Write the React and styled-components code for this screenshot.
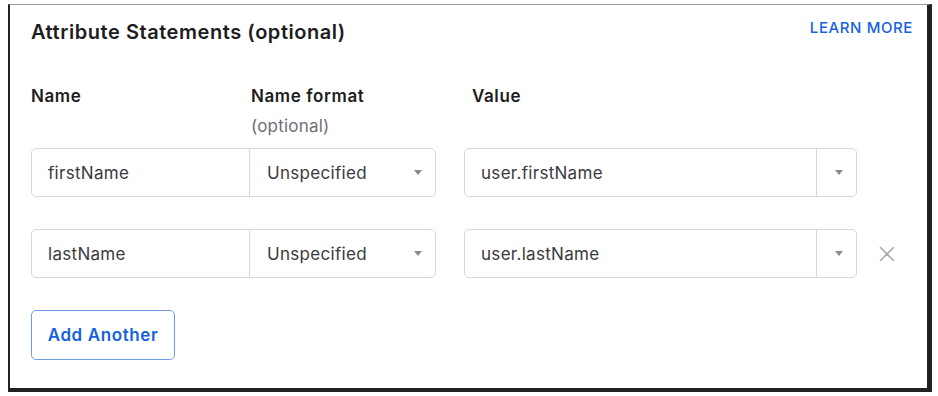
import React from 'react';
import styled, { createGlobalStyle } from 'styled-components';

const GlobalStyle = createGlobalStyle`
	html, body {
		margin: 0;
		padding: 0;
		background: #ffffff;
	}
	body {
		font-family: Inter, 'Noto Sans', 'Liberation Sans', sans-serif;
	}
`;

const Frame = styled.section`
	box-sizing: border-box;
	width: 924px;
	height: 388px;
	margin: 4px 0 0 8px;
	border-top: 1px solid #9a9a9c;
	border-left: 2px solid #222326;
	border-right: 5px solid #1f2125;
	border-bottom: 4px solid #1f2125;
	padding: 13px 14px 0 21px;
	background: #fff;
`;

const Header = styled.header`
	display: flex;
	justify-content: space-between;
	align-items: flex-start;
`;

const Title = styled.h2`
	margin: 0;
	font-size: 20px;
	line-height: 28px;
	font-weight: 600;
	letter-spacing: 0.55px;
	color: #1d1d21;
`;

const LearnMore = styled.a`
	margin-top: 0;
	font-size: 15px;
	line-height: 20px;
	font-weight: 500;
	letter-spacing: 0.6px;
	color: #1662dd;
	text-decoration: none;
	text-transform: uppercase;
`;

const Labels = styled.div`
	display: grid;
	grid-template-columns: 220px 213px 1fr;
	margin-top: 39px;
`;

const Label = styled.div`
	padding-left: ${p => p.$indent || 0}px;
	font-size: 17px;
	line-height: 22px;
	font-weight: 600;
	letter-spacing: 0.6px;
	color: #1d1d21;
`;

const Hint = styled.div`
	margin-top: 8px;
	font-size: 17px;
	line-height: 22px;
	font-weight: 400;
	letter-spacing: 0.2px;
	color: #6e6e78;
`;

const Rows = styled.div`
	display: flex;
	flex-direction: column;
	gap: 32px;
	margin-top: 11px;
`;

const Row = styled.div`
	display: flex;
	align-items: center;
`;

const Group = styled.div`
	display: flex;
	box-sizing: border-box;
	height: 49px;
	width: ${p => p.$width}px;
	margin-right: ${p => p.$gap || 0}px;
	border: 1px solid #d7d7dc;
	border-radius: 5px;
	background: #fff;
`;

const Cell = styled.div`
	display: flex;
	align-items: center;
	box-sizing: border-box;
	flex: ${p => (p.$width ? `0 0 ${p.$width}px` : '1')};
	padding: 0 ${p => p.$padRight ?? 16}px 0 ${p => p.$padLeft ?? 16}px;
	border-left: ${p => (p.$divider ? '1px solid #d7d7dc' : 'none')};
	font-size: 17px;
	letter-spacing: 0.3px;
	color: #3a3a40;
	justify-content: ${p => (p.$center ? 'center' : 'flex-start')};
`;

const CellText = styled.span`
	flex: 1;
`;

const Caret = styled.span`
	width: 0;
	height: 0;
	margin-left: ${p => p.$shift || 0}px;
	border-left: 4px solid transparent;
	border-right: 4px solid transparent;
	border-top: 5px solid #8a8a92;
`;

const Remove = styled.button`
	display: flex;
	align-items: center;
	justify-content: center;
	margin-left: 21px;
	padding: 0;
	width: 18px;
	height: 18px;
	border: none;
	background: none;
	color: #a8a8ae;
	cursor: pointer;
`;

const AddButton = styled.button`
	margin-top: 32px;
	box-sizing: border-box;
	width: 144px;
	height: 50px;
	padding: 0;
	border: 1px solid #6f9bea;
	border-radius: 5px;
	background: #fff;
	font-family: inherit;
	font-size: 17px;
	font-weight: 600;
	letter-spacing: 0.6px;
	color: #1662dd;
	cursor: pointer;
`;

const statements = [
	{ name: 'firstName', format: 'Unspecified', value: 'user.firstName', removable: false },
	{ name: 'lastName', format: 'Unspecified', value: 'user.lastName', removable: true }
];

const CrossIcon = () => (
	<svg width='16' height='16' viewBox='0 0 16 16' fill='none'>
		<path d='M1.5 1.5 L14.5 14.5 M14.5 1.5 L1.5 14.5' stroke='currentColor' strokeWidth='1.6' strokeLinecap='round' />
	</svg>
);

const App = () => {
	return (
		<>
			<GlobalStyle />
			<Frame>
				<Header>
					<Title>Attribute Statements (optional)</Title>
					<LearnMore href='#'>Learn more</LearnMore>
				</Header>

				<Labels>
					<Label>Name</Label>
					<Label>
						Name format
						<Hint>(optional)</Hint>
					</Label>
					<Label $indent={8}>Value</Label>
				</Labels>

				<Rows>
					{statements.map(item => (
						<Row key={item.name}>
							<Group $width={405} $gap={28}>
								<Cell $width={217}>{item.name}</Cell>
								<Cell $divider $padLeft={17} $padRight={13}>
									<CellText>{item.format}</CellText>
									<Caret />
								</Cell>
							</Group>
							<Group $width={393}>
								<Cell $padLeft={16}>{item.value}</Cell>
								<Cell $width={40} $divider $center $padLeft={0} $padRight={0}>
									<Caret $shift={5} />
								</Cell>
							</Group>
							{item.removable && (
								<Remove aria-label='Remove'>
									<CrossIcon />
								</Remove>
							)}
						</Row>
					))}
				</Rows>

				<AddButton>Add Another</AddButton>
			</Frame>
		</>
	);
};

export default App;
